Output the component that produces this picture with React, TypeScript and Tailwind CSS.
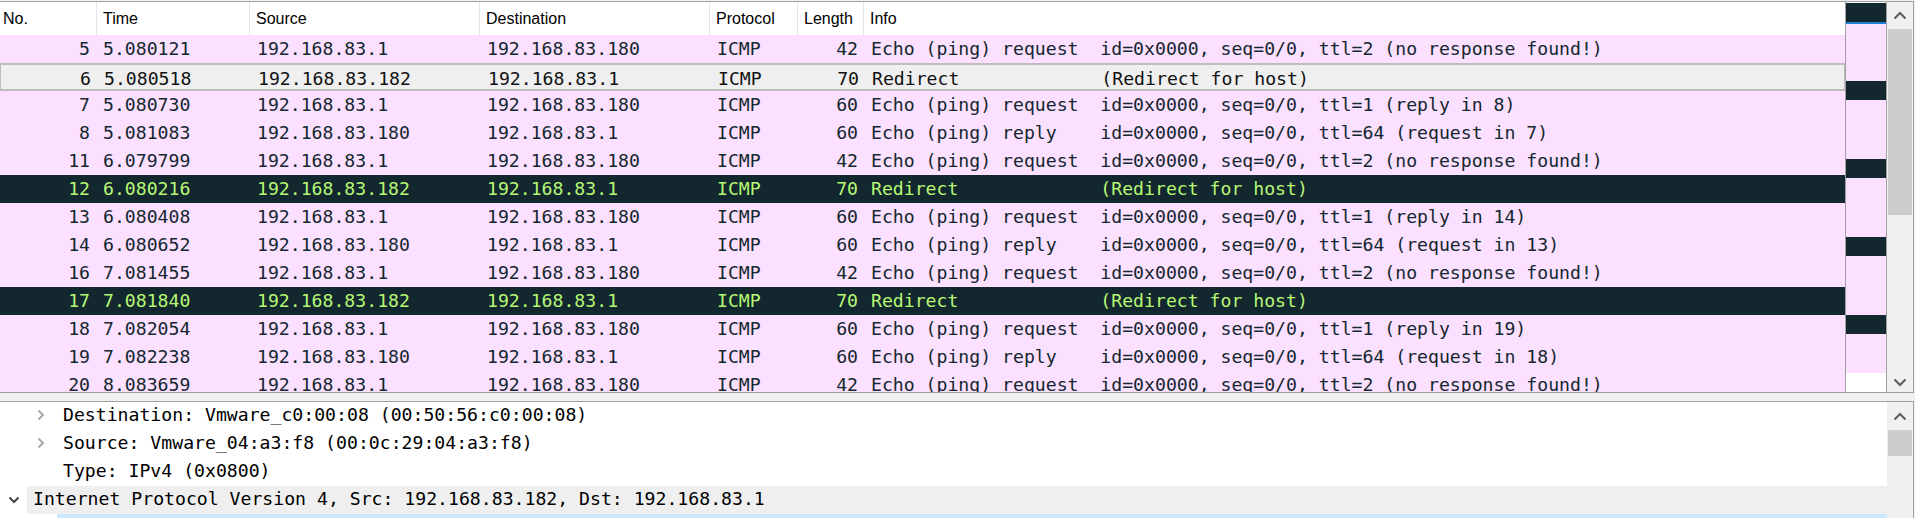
import React from 'react'

type Packet = {
    no: number
    time: string
    src: string
    dst: string
    proto: string
    len: number
    info: string
    kind?: 'sel' | 'err'
}

const REQ_LOST = 'Echo (ping) request  id=0x0000, seq=0/0, ttl=2 (no response found!)'
const REDIRECT = 'Redirect             (Redirect for host)'

const packets: Packet[] = [
    { no: 5, time: '5.080121', src: '192.168.83.1', dst: '192.168.83.180', proto: 'ICMP', len: 42, info: REQ_LOST },
    { no: 6, time: '5.080518', src: '192.168.83.182', dst: '192.168.83.1', proto: 'ICMP', len: 70, info: REDIRECT, kind: 'sel' },
    { no: 7, time: '5.080730', src: '192.168.83.1', dst: '192.168.83.180', proto: 'ICMP', len: 60, info: 'Echo (ping) request  id=0x0000, seq=0/0, ttl=1 (reply in 8)' },
    { no: 8, time: '5.081083', src: '192.168.83.180', dst: '192.168.83.1', proto: 'ICMP', len: 60, info: 'Echo (ping) reply    id=0x0000, seq=0/0, ttl=64 (request in 7)' },
    { no: 11, time: '6.079799', src: '192.168.83.1', dst: '192.168.83.180', proto: 'ICMP', len: 42, info: REQ_LOST },
    { no: 12, time: '6.080216', src: '192.168.83.182', dst: '192.168.83.1', proto: 'ICMP', len: 70, info: REDIRECT, kind: 'err' },
    { no: 13, time: '6.080408', src: '192.168.83.1', dst: '192.168.83.180', proto: 'ICMP', len: 60, info: 'Echo (ping) request  id=0x0000, seq=0/0, ttl=1 (reply in 14)' },
    { no: 14, time: '6.080652', src: '192.168.83.180', dst: '192.168.83.1', proto: 'ICMP', len: 60, info: 'Echo (ping) reply    id=0x0000, seq=0/0, ttl=64 (request in 13)' },
    { no: 16, time: '7.081455', src: '192.168.83.1', dst: '192.168.83.180', proto: 'ICMP', len: 42, info: REQ_LOST },
    { no: 17, time: '7.081840', src: '192.168.83.182', dst: '192.168.83.1', proto: 'ICMP', len: 70, info: REDIRECT, kind: 'err' },
    { no: 18, time: '7.082054', src: '192.168.83.1', dst: '192.168.83.180', proto: 'ICMP', len: 60, info: 'Echo (ping) request  id=0x0000, seq=0/0, ttl=1 (reply in 19)' },
    { no: 19, time: '7.082238', src: '192.168.83.180', dst: '192.168.83.1', proto: 'ICMP', len: 60, info: 'Echo (ping) reply    id=0x0000, seq=0/0, ttl=64 (request in 18)' },
    { no: 20, time: '8.083659', src: '192.168.83.1', dst: '192.168.83.180', proto: 'ICMP', len: 42, info: REQ_LOST },
]

const cols = 'grid grid-cols-[97px_153px_230px_230px_88px_66px_1fr]'
const mono = "font-['DejaVu_Sans_Mono',monospace] text-[18.15px]"

// colour bands of the packet minimap, top to bottom
const minimap = [
    'h-px bg-white',
    'h-[19px] bg-[#12272e]',
    'h-[2px] bg-[#1e7fd6]',
    'h-[57px] bg-[#fce0ff]',
    'h-[19px] bg-[#12272e]',
    'h-[59px] bg-[#fce0ff]',
    'h-[19px] bg-[#12272e]',
    'h-[59px] bg-[#fce0ff]',
    'h-[19px] bg-[#12272e]',
    'h-[59px] bg-[#fce0ff]',
    'h-[19px] bg-[#12272e]',
    'h-[39px] bg-[#fce0ff]',
    'flex-1 bg-white',
]

function Arrow({ dir }: { dir: 'up' | 'down' }) {
    return (
        <svg width="14" height="9" viewBox="0 0 14 9" className="text-[#606060]">
            <polyline
                points={dir === 'up' ? '1.5,7.5 7,2 12.5,7.5' : '1.5,1.5 7,7 12.5,1.5'}
                fill="none"
                stroke="currentColor"
                strokeWidth="2.2"
            />
        </svg>
    )
}

function Chevron({ open }: { open?: boolean }) {
    if (open) {
        return (
            <svg width="12" height="8" viewBox="0 0 12 8" className="text-[#444]">
                <polyline points="1.5,1.5 6,6 10.5,1.5" fill="none" stroke="currentColor" strokeWidth="2" />
            </svg>
        )
    }
    return (
        <svg width="8" height="12" viewBox="0 0 8 12" className="text-[#a8a8a8]">
            <polyline points="1.5,1.5 6,6 1.5,10.5" fill="none" stroke="currentColor" strokeWidth="2" />
        </svg>
    )
}

function Header() {
    const head = ['No.', 'Time', 'Source', 'Destination', 'Protocol', 'Length', 'Info']
    return (
        <div className={`${cols} h-[33px] shrink-0 bg-white font-['Liberation_Sans',Arial,sans-serif] text-[16px] text-black`}>
            {head.map((h, i) => (
                <div
                    key={h}
                    className={
                        i === 0
                            ? 'flex items-center pl-[3px] border-r border-[#e5e5e5]'
                            : i === 6
                            ? 'flex items-center pl-[6px]'
                            : 'flex items-center pl-[6px] border-r border-[#e5e5e5]'
                    }
                >
                    {h}
                </div>
            ))}
        </div>
    )
}

function Row({ p }: { p: Packet }) {
    const tone =
        p.kind === 'err'
            ? 'bg-[#12272e] text-[#b7f774]'
            : p.kind === 'sel'
            ? 'bg-[#efefef] text-[#111] border-2 border-[#bdbdbd] -mx-px'
            : 'bg-[#fce0ff] text-[#12272e]'
    return (
        <div className={`${cols} h-[28px] shrink-0 items-center pb-[4px] whitespace-pre ${mono} ${tone}`}>
            <div className="text-right pr-[7px]">{p.no}</div>
            <div className="pl-[6px]">{p.time}</div>
            <div className="pl-[7px]">{p.src}</div>
            <div className="pl-[7px]">{p.dst}</div>
            <div className="pl-[7px]">{p.proto}</div>
            <div className="text-right pr-[6px]">{p.len}</div>
            <div className="pl-[7px]">{p.info}</div>
        </div>
    )
}

function Scrollbar({ thumb }: { thumb: string }) {
    return (
        <div className="w-[26px] shrink-0 flex flex-col bg-[#f0f0f0]">
            <div className="h-[27px] flex items-center justify-center shrink-0">
                <Arrow dir="up" />
            </div>
            <div className={`${thumb} mx-px bg-[#cdcdcd] shrink-0`} />
            <div className="flex-1" />
            <div className="h-[20px] flex items-center justify-center shrink-0">
                <Arrow dir="down" />
            </div>
        </div>
    )
}

export default function App() {
    return (
        <div className="w-[1915px] h-[518px] overflow-hidden bg-[#f0f0f0] flex flex-col">
            {/* packet list */}
            <div className="mt-px h-[392px] shrink-0 flex border-t border-b border-r border-[#a0a0a0] mr-px">
                <div className="flex-1 flex flex-col bg-white overflow-hidden">
                    <Header />
                    {packets.map(p => (
                        <Row key={p.no} p={p} />
                    ))}
                </div>
                <div className="w-[41px] shrink-0 flex flex-col border-l border-[#a0a0a0]">
                    {minimap.map((c, i) => (
                        <div key={i} className={`${c} shrink-0`} />
                    ))}
                </div>
                <div className="border-l border-[#a0a0a0] flex">
                    <Scrollbar thumb="h-[186px]" />
                </div>
            </div>

            <div className="h-[8px] shrink-0" />

            {/* packet details */}
            <div className={`flex-1 flex border-t border-r border-[#a0a0a0] mr-px bg-white ${mono} text-black whitespace-pre`}>
                <div className="flex-1 flex flex-col overflow-hidden">
                    <div className="h-[28px] shrink-0 flex items-center pb-[2px]">
                        <div className="w-[57px] shrink-0 flex justify-end pr-[12px]">
                            <Chevron />
                        </div>
                        <span className="pl-[6px]">Destination: Vmware_c0:00:08 (00:50:56:c0:00:08)</span>
                    </div>
                    <div className="h-[28px] shrink-0 flex items-center pb-[2px]">
                        <div className="w-[57px] shrink-0 flex justify-end pr-[12px]">
                            <Chevron />
                        </div>
                        <span className="pl-[6px]">Source: Vmware_04:a3:f8 (00:0c:29:04:a3:f8)</span>
                    </div>
                    <div className="h-[28px] shrink-0 flex items-center pb-[2px]">
                        <div className="w-[57px] shrink-0" />
                        <span className="pl-[6px]">Type: IPv4 (0x0800)</span>
                    </div>
                    <div className="h-[28px] shrink-0 flex items-stretch">
                        <div className="w-[27px] shrink-0 flex items-center justify-center">
                            <Chevron open />
                        </div>
                        <div className="flex-1 flex items-center pl-[6px] pb-[2px] bg-[#efefef]">
                            Internet Protocol Version 4, Src: 192.168.83.182, Dst: 192.168.83.1
                        </div>
                    </div>
                    <div className="h-[28px] shrink-0 flex">
                        <div className="w-[57px] shrink-0" />
                        <div className="flex-1 bg-[#cce8ff]" />
                    </div>
                </div>
                <div className="flex">
                    <div className="w-[26px] shrink-0 flex flex-col bg-[#f0f0f0]">
                        <div className="h-[28px] flex items-center justify-center shrink-0">
                            <Arrow dir="up" />
                        </div>
                        <div className="h-[26px] mx-px bg-[#cdcdcd] shrink-0" />
                        <div className="flex-1" />
                        <div className="h-[22px] flex items-center justify-center shrink-0">
                            <Arrow dir="down" />
                        </div>
                    </div>
                </div>
            </div>
        </div>
    )
}
